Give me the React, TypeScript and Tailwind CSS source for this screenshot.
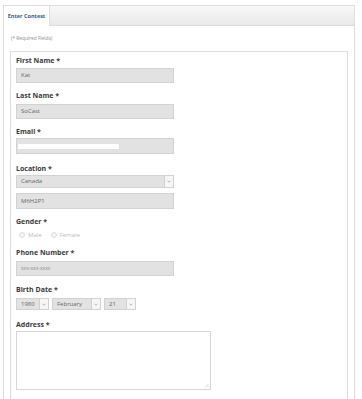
import { ReactNode } from 'react'

function Label({ children, className = '' }: { children: ReactNode; className?: string }) {
    return (
        <div className={`h-[10px] leading-[10px] text-[7px] font-bold text-[#3a3a3a] ${className}`}>
            {children}
        </div>
    )
}

function TextBox({ value, children, className = '' }: { value?: string; children?: ReactNode; className?: string }) {
    return (
        <div
            className={`w-[158px] border border-[#d2d2d2] bg-[#e2e2e2] flex items-center pl-[4px] text-[6px] text-[#666] ${className}`}
        >
            {value}
            {children}
        </div>
    )
}

function Chevron() {
    return (
        <svg width="4" height="3" viewBox="0 0 4 3">
            <path d="M0.5 0.7 L2 2.2 L3.5 0.7" fill="none" stroke="#9a9a9a" strokeWidth="0.7" />
        </svg>
    )
}

function Select({ value, width, className = '' }: { value: string; width: string; className?: string }) {
    return (
        <div className={`${width} flex items-stretch border border-[#d2d2d2] bg-[#e2e2e2] ${className}`}>
            <div className="flex-1 flex items-center pl-[4px] text-[6px] text-[#666]">{value}</div>
            <div className="w-[9px] bg-[#f6f6f6] border-l border-[#cfcfcf] flex items-center justify-center">
                <Chevron />
            </div>
        </div>
    )
}

function Radio({ label }: { label: string }) {
    return (
        <div className="flex items-center gap-[3px]">
            <div className="w-[6px] h-[6px] rounded-full border border-[#dcdcdc] bg-[#f4f4f4]" />
            <span className="text-[6px] text-[#bdbdbd]">{label}</span>
        </div>
    )
}

export default function App() {
    return (
        <div
            className="w-[362px] h-[399px] overflow-hidden bg-white pt-[5px] pl-[3px] pr-[7px]"
            style={{ fontFamily: '"Open Sans", "Liberation Sans", sans-serif' }}
        >
            <div className="h-[420px] border border-[#dedede] flex flex-col">
                <div className="h-[20px] flex bg-gradient-to-b from-[#f8f8f8] to-[#eaeaea] border-b border-[#dcdcdc]">
                    <div className="w-[46px] h-[20px] bg-white border-r border-[#dcdcdc] flex items-center justify-center text-[5.5px] font-bold text-[#35618a]">
                        Enter Contest
                    </div>
                </div>

                <div className="px-[6px] pt-[9px]">
                    <div className="text-[4.8px] leading-[7px] text-[#8a8a8a] pl-[1px]">(* Required Fields)</div>

                    <div className="mt-[9px] h-[360px] border border-[#dedede] pl-[5px] pt-[4px]">
                        <Label>First Name *</Label>
                        <TextBox value="Kat" className="mt-[2px] h-[15px]" />

                        <Label className="mt-[8px]">Last Name *</Label>
                        <TextBox value="SoCast" className="mt-[3px] h-[15px]" />

                        <Label className="mt-[8px]">Email *</Label>
                        <TextBox className="mt-[1px] h-[16px] !pl-0">
                            <div className="ml-[1px] w-[101px] h-[5px] bg-white" />
                        </TextBox>

                        <Label className="mt-[10px]">Location *</Label>
                        <Select value="Canada" width="w-[158px]" className="mt-[1px] h-[13px]" />
                        <TextBox value="M6H2P1" className="mt-[5px] h-[16px]" />

                        <Label className="mt-[8px]">Gender *</Label>
                        <div className="mt-[3px] h-[10px] flex items-center gap-[9px] pl-[3px]">
                            <Radio label="Male" />
                            <Radio label="Female" />
                        </div>

                        <Label className="mt-[8px]">Phone Number *</Label>
                        <TextBox value="xxx-xxx-xxxx" className="mt-[3px] h-[15px] !text-[5px] !text-[#888]" />

                        <Label className="mt-[9px]">Birth Date *</Label>
                        <div className="mt-[3px] flex gap-[3px]">
                            <Select value="1980" width="w-[33px]" className="h-[12px]" />
                            <Select value="February" width="w-[49px]" className="h-[12px]" />
                            <Select value="21" width="w-[32px]" className="h-[12px]" />
                        </div>

                        <Label className="mt-[10px]">Address *</Label>
                        <div className="mt-[1px] w-[195px] h-[59px] border border-[#d6d6d6] bg-white relative">
                            <svg className="absolute right-[1px] bottom-[1px]" width="5" height="5" viewBox="0 0 5 5">
                                <path d="M1 4.5 L4.5 1 M3 4.5 L4.5 3" stroke="#c4c4c4" strokeWidth="0.6" />
                            </svg>
                        </div>
                    </div>
                </div>
            </div>
        </div>
    )
}
